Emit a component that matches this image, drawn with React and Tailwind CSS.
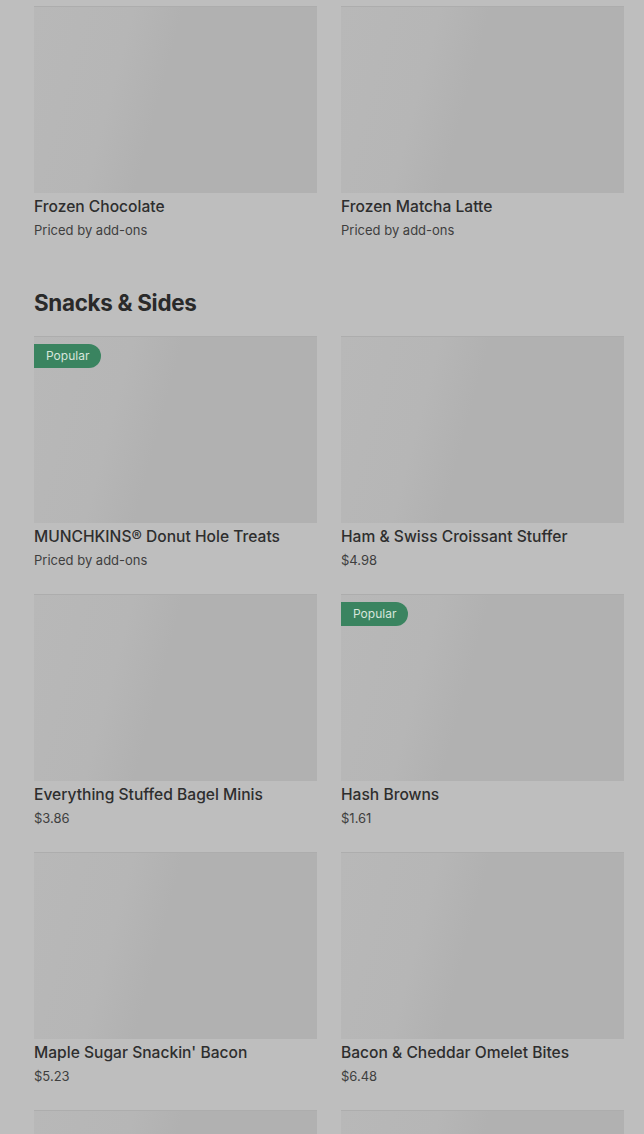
const sections = [
  {
    title: null,
    items: [
      { name: "Frozen Chocolate", sub: "Priced by add-ons" },
      { name: "Frozen Matcha Latte", sub: "Priced by add-ons" },
    ],
  },
  {
    title: "Snacks & Sides",
    items: [
      { name: "MUNCHKINS® Donut Hole Treats", sub: "Priced by add-ons", popular: true },
      { name: "Ham & Swiss Croissant Stuffer", sub: "$4.98" },
      { name: "Everything Stuffed Bagel Minis", sub: "$3.86" },
      { name: "Hash Browns", sub: "$1.61", popular: true },
      { name: "Maple Sugar Snackin' Bacon", sub: "$5.23" },
      { name: "Bacon & Cheddar Omelet Bites", sub: "$6.48" },
      { name: "", sub: "" },
      { name: "", sub: "" },
    ],
  },
]

function Card({ item }) {
  return (
    <div className="flex flex-col">
      <div className="relative h-[187px] bg-[linear-gradient(105deg,#b8b8b8_0%,#b6b6b6_30%,#b1b1b1_45%,#b1b1b1_100%)] border-t border-[#adadad]">
        {item.popular && (
          <div className="absolute top-[7px] left-0 h-6 pl-3 pr-3 flex items-center rounded-r-full bg-[#3a8460] text-[12px] text-[#d7e6dc]">
            Popular
          </div>
        )}
      </div>
      <div className="pt-[2px] text-[15.6px] leading-6 font-medium text-[#2e2e2e]">{item.name}</div>
      <div className="mt-[1px] text-[13px] leading-5 text-[#3e3e3e]">{item.sub}</div>
    </div>
  )
}

export default function App() {
  return (
    <div className="bg-[#bebebe] pl-[34px] pr-5 pt-[6px] font-['Inter','Noto_Sans',sans-serif] overflow-hidden h-[1134px]">
      {sections.map((s, i) => (
        <section key={i} className={i > 0 ? "mt-[49px]" : ""}>
          {s.title && (
            <h2 className="text-[22.4px] leading-7 font-bold tracking-[-0.3px] text-[#2a2a2a] mb-[19px]">{s.title}</h2>
          )}
          <div className="grid grid-cols-2 gap-x-6 gap-y-6">
            {s.items.map((it, j) => (
              <Card key={j} item={it} />
            ))}
          </div>
        </section>
      ))}
    </div>
  )
}
